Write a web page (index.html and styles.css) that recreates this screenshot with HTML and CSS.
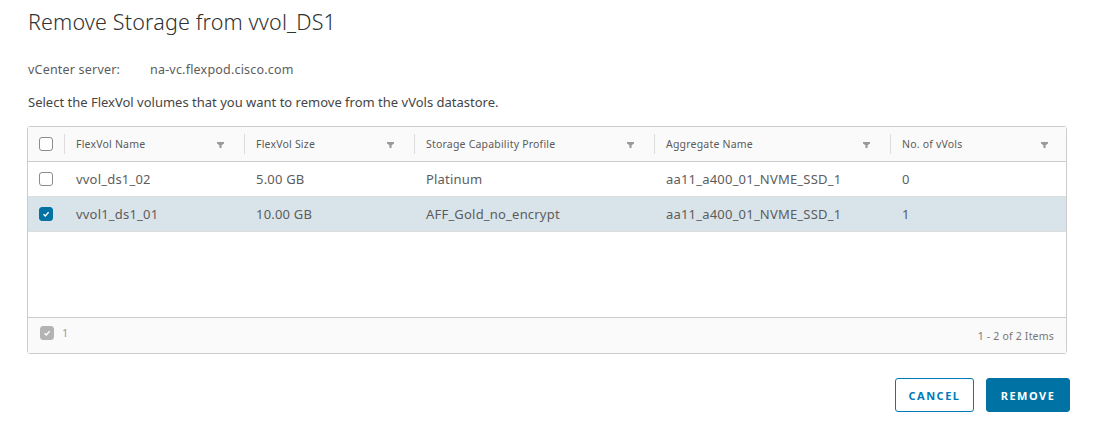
FILE: index.html
```html
<!DOCTYPE html>
<html>
<head>
<meta charset="utf-8">
<link rel="stylesheet" href="styles.css">
</head>
<body>
<div class="dialog">
  <h1 class="title">Remove Storage from vvol_DS1</h1>
  <div class="server"><span class="label">vCenter server:</span><span class="value">na-vc.flexpod.cisco.com</span></div>
  <p class="intro">Select the FlexVol volumes that you want to remove from the vVols datastore.</p>
  <div class="grid">
    <div class="row head">
      <div class="cell chk"><span class="box"></span></div>
      <div class="cell c1 sep">FlexVol Name<span class="filter"></span></div>
      <div class="cell c2 sep">FlexVol Size<span class="filter"></span></div>
      <div class="cell c3 sep">Storage Capability Profile<span class="filter"></span></div>
      <div class="cell c4 sep">Aggregate Name<span class="filter"></span></div>
      <div class="cell c5 sep">No. of vVols<span class="filter"></span></div>
    </div>
    <div class="row">
      <div class="cell chk"><span class="box"></span></div>
      <div class="cell c1">vvol_ds1_02</div>
      <div class="cell c2">5.00 GB</div>
      <div class="cell c3">Platinum</div>
      <div class="cell c4">aa11_a400_01_NVME_SSD_1</div>
      <div class="cell c5">0</div>
    </div>
    <div class="row selected">
      <div class="cell chk"><span class="box checked"><svg viewBox="0 0 10 10" width="10" height="10"><path d="M2.5 5.2 L4.3 7 L7.6 3.3" fill="none" stroke="#fff" stroke-width="1.4"/></svg></span></div>
      <div class="cell c1">vvol1_ds1_01</div>
      <div class="cell c2">10.00 GB</div>
      <div class="cell c3">AFF_Gold_no_encrypt</div>
      <div class="cell c4">aa11_a400_01_NVME_SSD_1</div>
      <div class="cell c5">1</div>
    </div>
    <div class="empty"></div>
    <div class="foot">
      <div class="sel"><span class="box grey"><svg viewBox="0 0 10 10" width="10" height="10"><path d="M2.5 5.2 L4.3 7 L7.6 3.3" fill="none" stroke="#fff" stroke-width="1.4"/></svg></span><span class="count">1</span></div>
      <div class="items">1 - 2 of 2 Items</div>
    </div>
  </div>
  <div class="actions">
    <button class="btn outline">CANCEL</button>
    <button class="btn primary">REMOVE</button>
  </div>
</div>
</body>
</html>
```

FILE: styles.css
```css
html, body {
  margin: 0;
  padding: 0;
  background: #fff;
}
body {
  font-family: "Noto Sans", "Open Sans", sans-serif;
  color: #5c5c5c;
}
.dialog {
  width: 1096px;
  height: 432px;
  padding: 0 26px 0 28px;
  box-sizing: border-box;
}
.title {
  margin: 0;
  padding-top: 7px;
  font-size: 21.5px;
  font-weight: 300;
  color: #313131;
  line-height: 30px;
  letter-spacing: 0.15px;
}
.server {
  margin-top: 25px;
  font-size: 12.5px;
  line-height: 16px;
  letter-spacing: 0.2px;
  display: flex;
}
.server .label {
  width: 122px;
}
.intro {
  margin: 16px 0 0 0;
  font-size: 13px;
  line-height: 16px;
  color: #454545;
}
.grid {
  margin-top: 16px;
  width: 1040px;
  margin-left: -1px;
  border: 1px solid #ccc;
  border-radius: 3px;
  box-sizing: border-box;
  display: flex;
  flex-direction: column;
  height: 228px;
}
.row {
  display: flex;
  height: 35px;
  align-items: center;
  border-bottom: 1px solid #ddd;
  box-sizing: border-box;
  font-size: 13px;
  letter-spacing: 0.2px;
  color: #5c5c5c;
}
.row.head {
  font-size: 10.5px;
  letter-spacing: 0.2px;
  color: #5a5a5a;
  background: #fafafa;
  border-bottom: 1px solid #ccc;
}
.row.selected {
  background: #d9e4ea;
}
.cell {
  height: 100%;
  display: flex;
  align-items: center;
  box-sizing: border-box;
  position: relative;
  padding-left: 12px;
}
.chk {
  width: 36px;
  padding-left: 11px;
}
.c1 { width: 180px; }
.c2 { width: 170px; }
.c3 { width: 240px; }
.c4 { width: 236px; }
.c5 { flex: 1; }
.head .sep::before {
  content: "";
  position: absolute;
  left: 0;
  top: 7px;
  bottom: 7px;
  width: 1px;
  background: #ddd;
}
.filter {
  position: absolute;
  right: 20px;
  top: 15px;
  width: 7px;
  height: 6px;
  background: #999;
  clip-path: polygon(0 0, 100% 0, 100% 25%, 65% 55%, 65% 100%, 35% 100%, 35% 55%, 0 25%);
}
.c5 .filter {
  right: 18px;
}
.box {
  width: 14px;
  height: 14px;
  border: 1px solid #8c8c8c;
  border-radius: 3px;
  background: #fff;
  box-sizing: border-box;
  display: inline-flex;
  align-items: center;
  justify-content: center;
}
.box.checked {
  background: #0072a3;
  border-color: #0072a3;
}
.box.grey {
  background: #b3b3b3;
  border-color: #b3b3b3;
}
.empty {
  flex: 1;
}
.foot {
  height: 35px;
  border-top: 1px solid #ccc;
  background: #fafafa;
  display: flex;
  align-items: center;
  justify-content: space-between;
  padding: 0 12px 0 12px;
  color: #777;
}
.sel {
  display: flex;
  align-items: center;
  gap: 8px;
  margin-top: -6px;
}
.count {
  color: #999;
  font-size: 11px;
}
.items {
  font-size: 10.5px;
  letter-spacing: 0.2px;
  color: #777;
}
.actions {
  display: flex;
  justify-content: flex-end;
  gap: 12px;
  margin-top: 24px;
}
.btn {
  height: 34px;
  border-radius: 3px;
  font-family: "Noto Sans", sans-serif;
  font-size: 11px;
  font-weight: 700;
  letter-spacing: 1.5px;
  cursor: pointer;
  box-sizing: border-box;
}
.btn.outline {
  width: 79px;
  background: #fff;
  color: #0079b8;
  border: 1px solid #0079b8;
}
.btn.primary {
  width: 84px;
  background: #0072a3;
  color: #fff;
  border: 1px solid #0072a3;
}
```
